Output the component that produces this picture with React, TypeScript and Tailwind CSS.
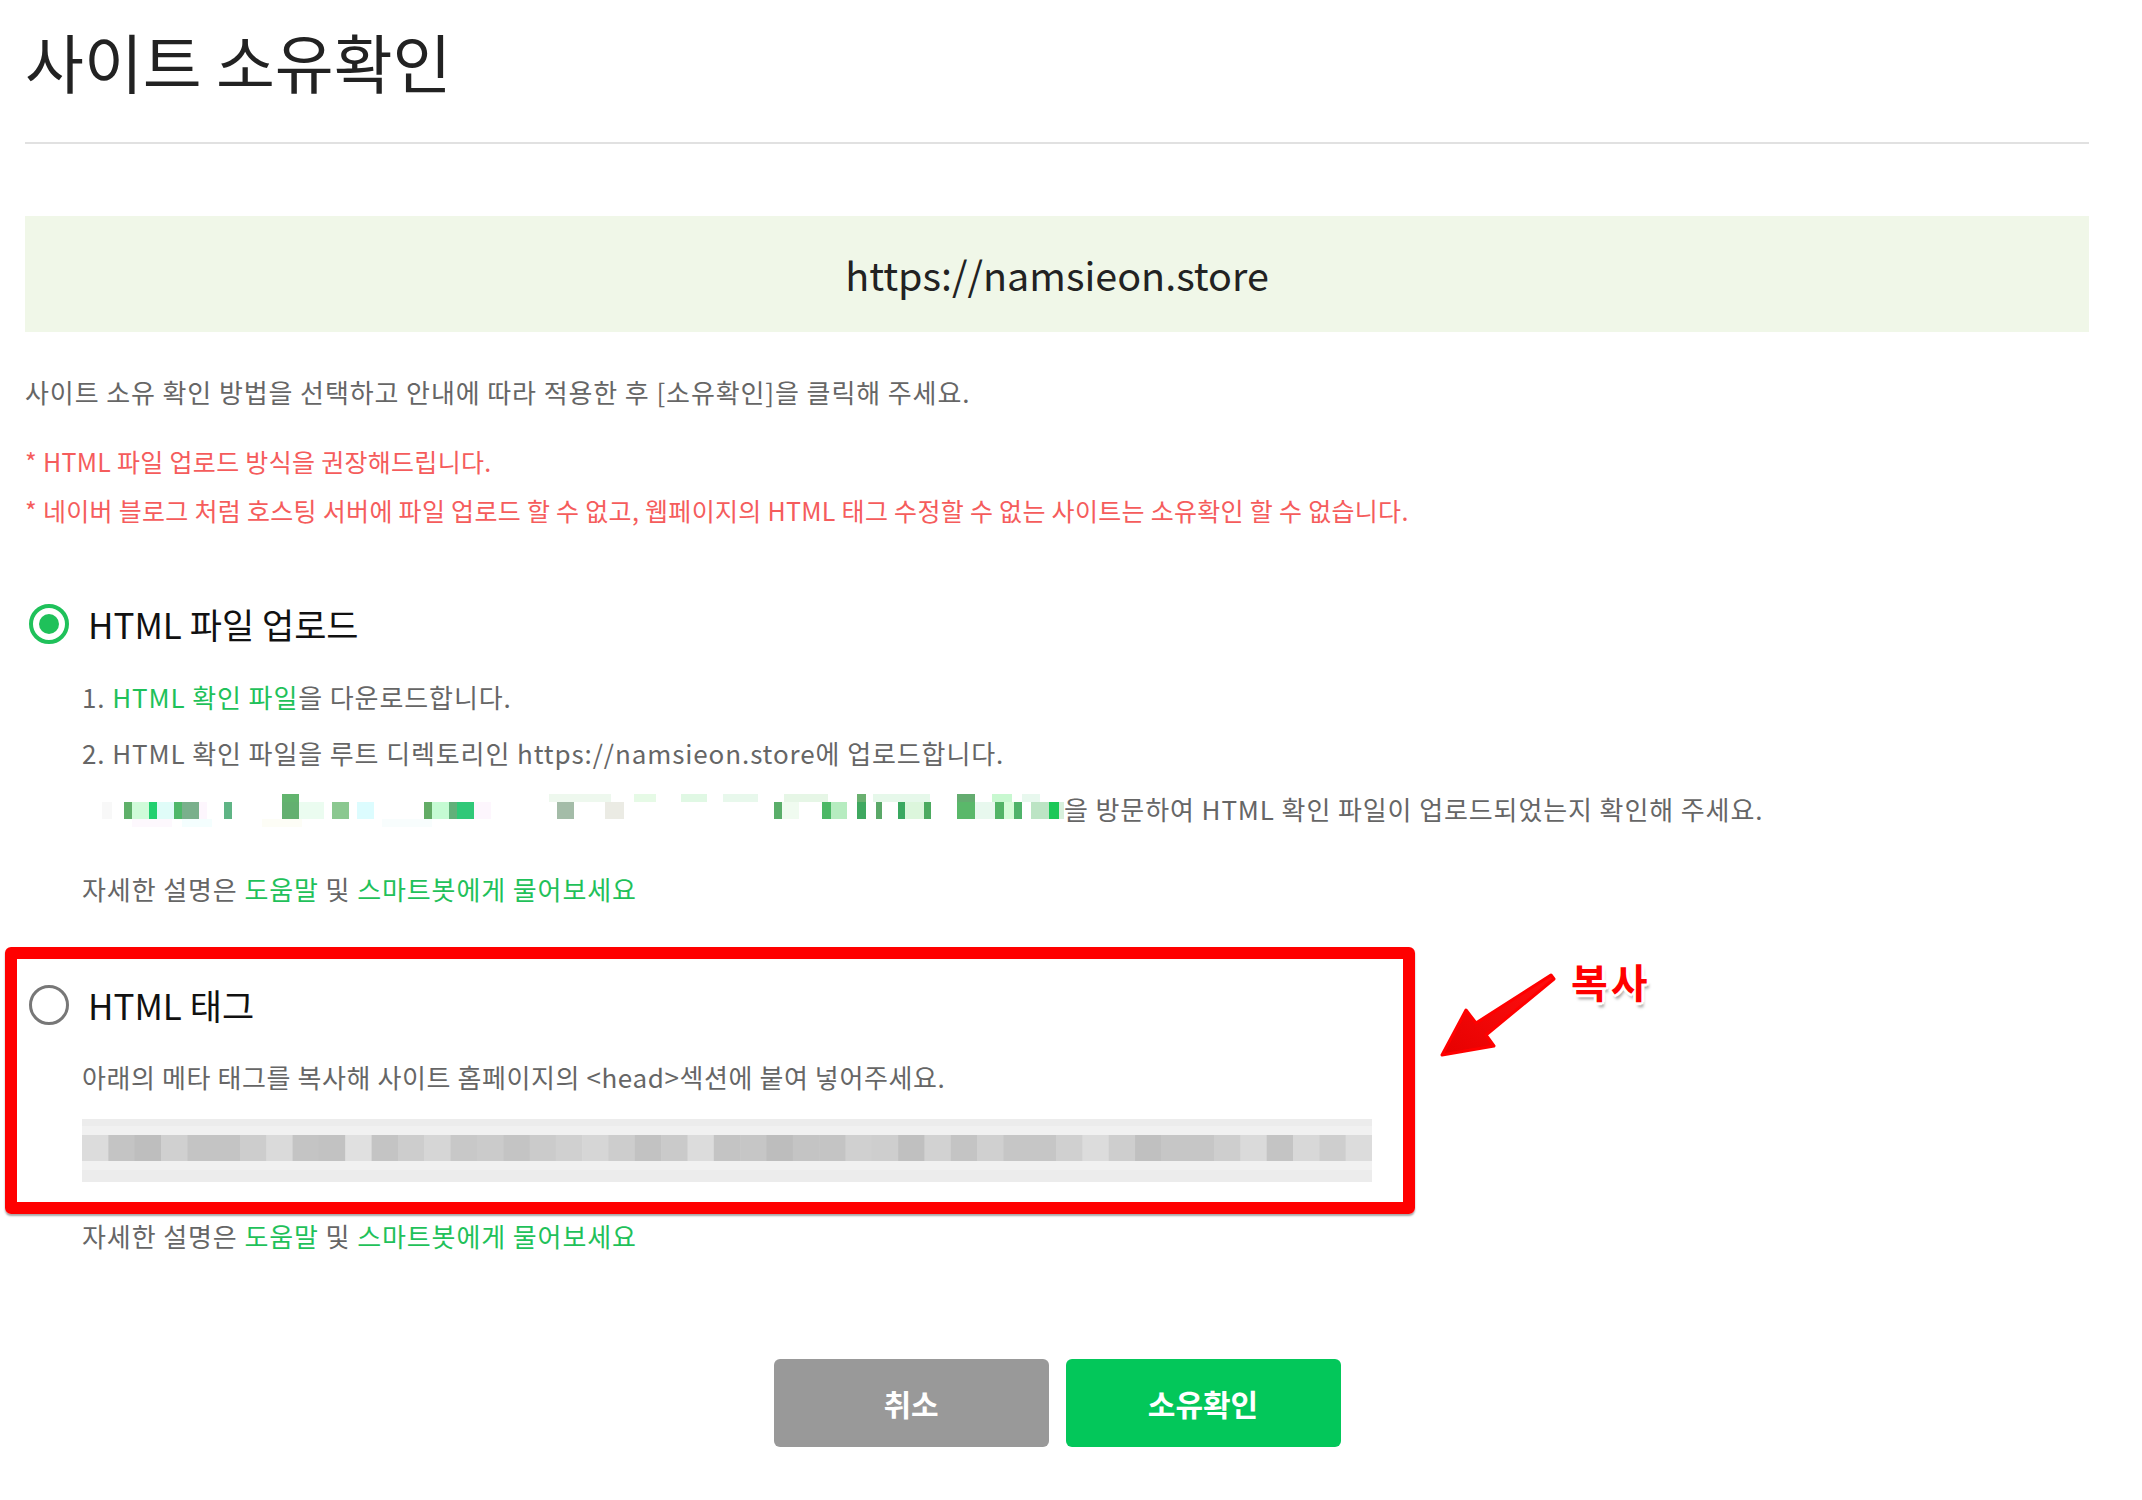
import React from "react";

const codeGrays = [0xdc,0xc4,0xbe,0xd0,0xc4,0xc4,0xcd,0xda,0xc4,0xc2,0xe0,0xc4,0xcd,0xd6,0xc8,0xcb,0xc4,0xcb,0xd0,0xd6,0xcd,0xc2,0xca,0xdc,0xc4,0xc6,0xbd,0xc4,0xc4,0xd0,0xce,0xc0,0xd2,0xc4,0xd0,0xc6,0xc6,0xd0,0xdc,0xce,0xc0,0xc6,0xc6,0xce,0xda,0xc4,0xd8,0xce,0xdc];

type R = [number, number, number, number, string];
const blurRects: R[] = [
  // top row
  [200, 4, 17, 8, "#62b46e"],
  [467, 4, 62, 8, "#eef8ee"],
  [552, 4, 22, 8, "#e6fae6"],
  [599, 4, 26, 8, "#e0f8e4"],
  [641, 4, 35, 8, "#e8f8ec"],
  [702, 4, 44, 8, "#e6f6e6"],
  [775, 4, 9, 8, "#6ab070"],
  [791, 4, 57, 8, "#e6f8ea"],
  [875, 4, 18, 8, "#64ac70"],
  [910, 4, 20, 8, "#c8f8d0"],
  [940, 4, 18, 8, "#e8f8ee"],
  // main row
  [20, 12, 10, 17, "#f8f8f8"],
  [42, 12, 8, 17, "#5fb06a"],
  [50, 12, 17, 17, "#d0fbd9"],
  [67, 12, 8, 25, "#22d070"],
  [75, 12, 17, 17, "#e0fcf8"],
  [92, 12, 8, 17, "#4fb86a"],
  [100, 12, 17, 17, "#7ab08c"],
  [117, 12, 8, 17, "#fdf6fd"],
  [142, 12, 8, 17, "#5fb485"],
  [200, 12, 17, 17, "#63b070"],
  [217, 12, 25, 17, "#ebfcf0"],
  [250, 12, 17, 17, "#8bc890"],
  [275, 12, 17, 17, "#dcfcfe"],
  [342, 12, 8, 17, "#63ac66"],
  [350, 12, 17, 17, "#c5fbd3"],
  [367, 12, 8, 17, "#62b07a"],
  [375, 12, 17, 17, "#30c878"],
  [392, 12, 17, 17, "#fdf6fd"],
  [475, 12, 17, 17, "#a4bca8"],
  [523, 12, 19, 17, "#ebebe4"],
  [692, 12, 8, 17, "#5aae6a"],
  [700, 12, 17, 17, "#f0fbf0"],
  [740, 12, 9, 17, "#4cb866"],
  [749, 12, 16, 17, "#b6ecc0"],
  [775, 12, 9, 17, "#3fa860"],
  [794, 12, 6, 17, "#5aa868"],
  [816, 12, 7, 17, "#3aa860"],
  [823, 12, 19, 17, "#dcf6dc"],
  [842, 12, 7, 17, "#4caa60"],
  [875, 12, 18, 17, "#5ab86a"],
  [893, 12, 20, 17, "#e8f8ee"],
  [913, 12, 9, 17, "#52b466"],
  [922, 12, 10, 17, "#d6fcd8"],
  [932, 12, 8, 17, "#4fb36a"],
  [949, 12, 18, 17, "#bce4c4"],
  [967, 12, 10, 17, "#1cc858"],
  [977, 12, 5, 17, "#d8f0dc"],
  // bottom row
  [50, 29, 40, 8, "#fdf8fd"],
  [100, 29, 30, 8, "#f4fefe"],
  [180, 29, 40, 8, "#fdfdf6"],
  [300, 29, 50, 8, "#f8fdfd"],
];

function BlurredUrl() {
  return (
    <svg width="982" height="38" viewBox="0 0 982 38" className="inline-block shrink-0 align-middle">
      {blurRects.map(([x, y, w, h, c], i) => (
        <rect key={i} x={x} y={y} width={w} height={h} fill={c} />
      ))}
    </svg>
  );
}

function CodeBox() {
  const bw = 1290 / codeGrays.length;
  return (
    <svg width="1290" height="63" viewBox="0 0 1290 63" className="block">
      <rect x="0" y="0" width="1290" height="63" fill="#ececec" />
      <rect x="0" y="7" width="1290" height="44" fill="#f1f1f1" />
      {codeGrays.map((g, i) => {
        const c = `rgb(${g},${g},${g})`;
        return <rect key={i} x={i * bw} y="16" width={bw + 0.5} height="26" fill={c} />;
      })}
    </svg>
  );
}

function HelpLine() {
  return (
    <p className="text-[26px] leading-[36px] tracking-[0.9px] text-[#666]">
      자세한 설명은 <span className="text-[#1fc15a]">도움말</span> 및{" "}
      <span className="text-[#1fc15a]">스마트봇에게 물어보세요</span>
    </p>
  );
}

export default function App() {
  return (
    <div className="min-h-[1500px] bg-white font-['Noto_Sans_CJK_KR','Noto_Sans',sans-serif]">
      <div className="ml-[25px] w-[2064px]">
        <div className="border-b-2 border-[#e1e1e1] pt-[27px] pb-[49px]">
          <h1 className="text-[64px] font-normal leading-[66px] text-[#222]">사이트 소유확인</h1>
        </div>

        <div className="mt-[72px] flex h-[116px] items-center justify-center bg-[#f0f7e8]">
          <span className="text-[39.5px] leading-[50px] text-[#222]">https://namsieon.store</span>
        </div>

        <p className="mt-[42px] text-[26px] leading-[36px] tracking-[0.9px] text-[#666]">
          사이트 소유 확인 방법을 선택하고 안내에 따라 적용한 후 [소유확인]을 클릭해 주세요.
        </p>

        <div className="mt-[27px] text-[25px] leading-[49px] tracking-[0.3px] text-[#f55c5c]">
          <p>* HTML 파일 업로드 방식을 권장해드립니다.</p>
          <p>* 네이버 블로그 처럼 호스팅 서버에 파일 업로드 할 수 없고, 웹페이지의 HTML 태그 수정할 수 없는 사이트는 소유확인 할 수 없습니다.</p>
        </div>

        {/* Section 1 */}
        <div className="mt-[69px] flex h-[40px] items-center gap-[19px] pl-[4px]">
          <span className="flex h-[40px] w-[40px] items-center justify-center rounded-full border-[4px] border-[#1fc15a]">
            <span className="h-[20px] w-[20px] rounded-full bg-[#1fc15a]" />
          </span>
          <span className="text-[35px] leading-[40px] text-[#111]">HTML 파일 업로드</span>
        </div>

        <div className="mt-[25px] pl-[57px] text-[26px] leading-[56px] tracking-[0.9px] text-[#666]">
          <p>
            1. <span className="text-[#1fc15a]">HTML 확인 파일</span>을 다운로드합니다.
          </p>
          <p>2. HTML 확인 파일을 루트 디렉토리인 https://namsieon.store에 업로드합니다.</p>
          <p className="flex h-[56px] items-center">
            <BlurredUrl />
            <span>을 방문하여 HTML 확인 파일이 업로드되었는지 확인해 주세요.</span>
          </p>
        </div>

        <div className="mt-[34px] pl-[57px]">
          <HelpLine />
        </div>

        {/* Section 2 */}
        <div className="relative mt-[78px]">
          <div className="pointer-events-none absolute -left-[20px] -top-[38px] h-[267px] w-[1410px] rounded-[6px] border-[12px] border-[#ff0000] shadow-[0_2px_2px_rgba(0,0,0,0.35)]" />

          <svg
            className="absolute left-[1405px] -top-[20px]"
            width="130"
            height="100"
            viewBox="0 0 130 100"
          >
            <defs>
              <linearGradient id="arrowGrad" x1="1" y1="0" x2="0" y2="1">
                <stop offset="0" stopColor="#ff1010" />
                <stop offset="1" stopColor="#e60000" />
              </linearGradient>
            </defs>
            <polygon
              points="121,10 124,14 56,70 64,81 12,90 36,45 46,58"
              fill="url(#arrowGrad)"
              stroke="#f00"
              strokeWidth="3"
              strokeLinejoin="round"
            />
          </svg>

          <span className="absolute left-[1546px] -top-[24px] text-[40px] font-bold leading-[40px] tracking-[3px] text-[#ff0000] [text-shadow:-2px_-2px_0_#fff,2px_-2px_0_#fff,-2px_2px_0_#fff,2px_2px_0_#fff,0_3px_0_#fff,3px_0_0_#fff,-3px_0_0_#fff,0_-3px_0_#fff,2px_5px_3px_rgba(0,0,0,0.35)]">
            복사
          </span>

          <div className="flex h-[40px] items-center gap-[19px] pl-[4px]">
            <span className="h-[40px] w-[40px] rounded-full border-[3px] border-[#777]" />
            <span className="text-[35px] leading-[40px] text-[#111]">HTML 태그</span>
          </div>

          <p className="mt-[34px] pl-[57px] text-[26px] leading-[36px] tracking-[0.6px] text-[#666]">
            아래의 메타 태그를 복사해 사이트 홈페이지의 &lt;head&gt;섹션에 붙여 넣어주세요.
          </p>

          <div className="mt-[24px] pl-[57px]">
            <CodeBox />
          </div>

          <div className="mt-[36px] pl-[57px]">
            <HelpLine />
          </div>
        </div>

        <div className="mt-[105px] flex justify-center gap-[17px]">
          <button className="flex h-[88px] w-[275px] items-center justify-center rounded-[6px] bg-[#999] text-[30px] font-bold text-white">
            취소
          </button>
          <button className="flex h-[88px] w-[275px] items-center justify-center rounded-[6px] bg-[#03c75a] text-[30px] font-bold text-white">
            소유확인
          </button>
        </div>
      </div>
    </div>
  );
}
